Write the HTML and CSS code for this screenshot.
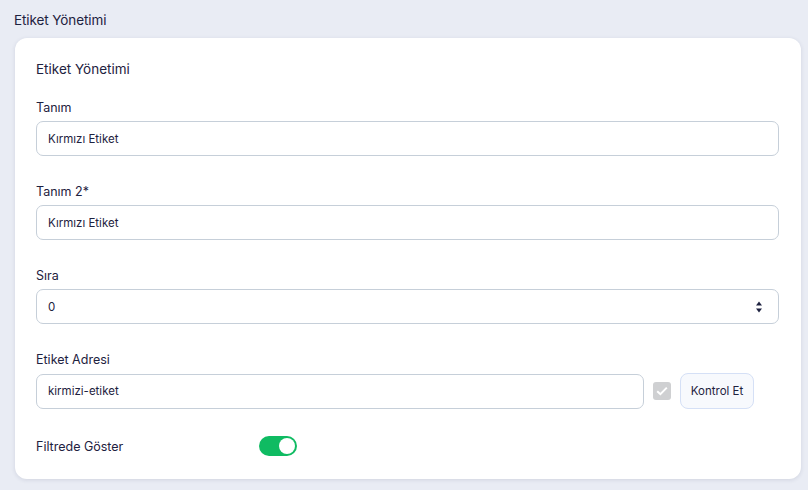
FILE: index.html
```html
<!DOCTYPE html>
<html lang="tr">
<head>
<meta charset="utf-8">
<title>Etiket Yönetimi</title>
<link rel="stylesheet" href="styles.css">
</head>
<body>
<div class="page">
  <h1 class="page-title">Etiket Yönetimi</h1>
  <div class="card">
    <h2 class="card-title">Etiket Yönetimi</h2>
    <div class="field">
      <label class="label">Tanım</label>
      <div class="input">Kırmızı Etiket</div>
    </div>
    <div class="field">
      <label class="label">Tanım 2*</label>
      <div class="input">Kırmızı Etiket</div>
    </div>
    <div class="field">
      <label class="label">Sıra</label>
      <div class="input number">
        <span>0</span>
        <svg class="spin" width="8" height="14" viewBox="0 0 8 14"><path d="M4 1.5 L7 5.5 H1 Z" fill="#1e2240"/><path d="M4 12.5 L7 8.5 H1 Z" fill="#1e2240"/></svg>
      </div>
    </div>
    <div class="field">
      <label class="label">Etiket Adresi</label>
      <div class="addr-row">
        <div class="input grow">kirmizi-etiket</div>
        <span class="check"><svg width="12" height="10" viewBox="0 0 12 10"><path d="M1.2 5.2 L4.4 8.2 L10.8 1.6" fill="none" stroke="#fff" stroke-width="2"/></svg></span>
        <button class="btn">Kontrol Et</button>
      </div>
    </div>
    <div class="toggle-row">
      <span class="toggle-label">Filtrede Göster</span>
      <span class="toggle"><span class="knob"></span></span>
    </div>
  </div>
</div>
</body>
</html>
```
FILE: styles.css
```css
* { box-sizing: border-box; }
html, body { margin: 0; padding: 0; }
body {
  background: #e9ecf4;
  font-family: "Inter", "Noto Sans", "Liberation Sans", sans-serif;
  color: #1e2240;
  width: 808px;
  height: 490px;
  overflow: hidden;
}
.page { padding: 11px 7px 0 15px; }
.page-title {
  margin: 0 0 9px -1px;
  font-size: 13.5px;
  font-weight: 400;
  line-height: 18px;
  letter-spacing: -0.1px;
}
.card {
  background: #fff;
  border-radius: 12px;
  box-shadow: 0 1px 4px rgba(30, 40, 80, 0.12);
  padding: 22px 22px 23px 21px;
  height: 441px;
}
.card-title {
  margin: 0 0 22px;
  font-size: 13.5px;
  font-weight: 400;
  line-height: 18px;
}
.field { margin-bottom: 28px; }
.label {
  display: block;
  font-size: 12.5px;
  line-height: 16px;
  margin-bottom: 5px;
}
.input {
  height: 35px;
  border: 1px solid #c6cfd9;
  border-radius: 7px;
  padding: 0 11px;
  display: flex;
  align-items: center;
  font-size: 11.5px;
  color: #1e2240;
}
.number { justify-content: space-between; padding-right: 15px; }
.spin { display: block; }
.addr-row { display: flex; align-items: center; }
.grow { flex: 1; }
.check {
  width: 18px;
  height: 18px;
  margin-left: 9px;
  border-radius: 3px;
  background: #cfd0d2;
  display: flex;
  align-items: center;
  justify-content: center;
}
.btn {
  margin-left: 9px;
  width: 74px;
  height: 36px;
  border: 1px solid #d5e0f6;
  border-radius: 8px;
  background: #f7f9fd;
  font-family: inherit;
  font-size: 11.5px;
  color: #1e2240;
  padding: 0;
  margin-right: 25px;
}
.toggle-row { display: flex; align-items: center; margin-top: -1px; }
.toggle-label { width: 223px; font-size: 12.5px; }
.toggle {
  width: 38px;
  height: 20px;
  border-radius: 10px;
  background: #0fbb62;
  position: relative;
  display: block;
}
.knob {
  position: absolute;
  right: 2px;
  top: 2px;
  width: 16px;
  height: 16px;
  border-radius: 50%;
  background: #fff;
}
```
